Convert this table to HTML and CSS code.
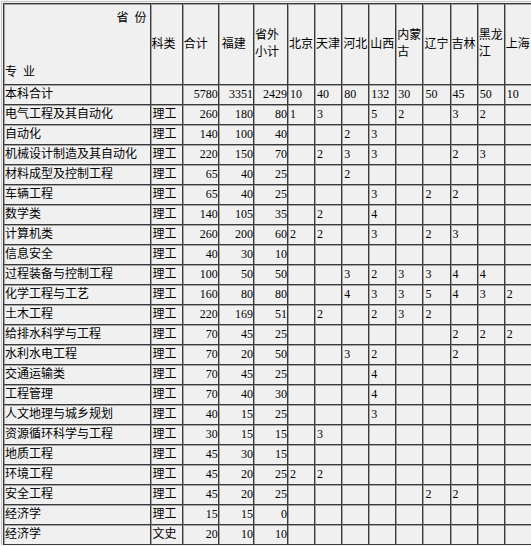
FILE: index.html
```html
<!DOCTYPE html>
<html lang="zh-CN">
<head>
<meta charset="utf-8">
<title>分省招生计划</title>
<link rel="stylesheet" href="styles.css">
</head>
<body>
<table class="plan">
<thead>
<tr>
<th class="c-major"><div class="corner"><span class="prov">省 份</span><span class="maj">专 业</span></div></th>
<th class="c-type">科类</th>
<th class="c-total">合计</th>
<th class="c-fj">福建</th>
<th class="c-out">省外小计</th>
<th class="c-p">北京</th>
<th class="c-p">天津</th>
<th class="c-p">河北</th>
<th class="c-p">山西</th>
<th class="c-p">内蒙古</th>
<th class="c-p">辽宁</th>
<th class="c-p">吉林</th>
<th class="c-p">黑龙江</th>
<th class="c-p">上海</th>
<th class="c-p">江苏</th>
</tr>
</thead>
<tbody>
<tr><td>本科合计</td><td></td><td class="n">5780</td><td class="n">3351</td><td class="n">2429</td><td>10</td><td>40</td><td>80</td><td>132</td><td>30</td><td>50</td><td>45</td><td>50</td><td>10</td><td></td></tr>
<tr><td>电气工程及其自动化</td><td>理工</td><td class="n">260</td><td class="n">180</td><td class="n">80</td><td>1</td><td>3</td><td></td><td>5</td><td>2</td><td></td><td>3</td><td>2</td><td></td><td></td></tr>
<tr><td>自动化</td><td>理工</td><td class="n">140</td><td class="n">100</td><td class="n">40</td><td></td><td></td><td>2</td><td>3</td><td></td><td></td><td></td><td></td><td></td><td></td></tr>
<tr><td>机械设计制造及其自动化</td><td>理工</td><td class="n">220</td><td class="n">150</td><td class="n">70</td><td></td><td>2</td><td>3</td><td>3</td><td></td><td></td><td>2</td><td>3</td><td></td><td></td></tr>
<tr><td>材料成型及控制工程</td><td>理工</td><td class="n">65</td><td class="n">40</td><td class="n">25</td><td></td><td></td><td>2</td><td></td><td></td><td></td><td></td><td></td><td></td><td></td></tr>
<tr><td>车辆工程</td><td>理工</td><td class="n">65</td><td class="n">40</td><td class="n">25</td><td></td><td></td><td></td><td>3</td><td></td><td>2</td><td>2</td><td></td><td></td><td></td></tr>
<tr><td>数学类</td><td>理工</td><td class="n">140</td><td class="n">105</td><td class="n">35</td><td></td><td>2</td><td></td><td>4</td><td></td><td></td><td></td><td></td><td></td><td></td></tr>
<tr><td>计算机类</td><td>理工</td><td class="n">260</td><td class="n">200</td><td class="n">60</td><td>2</td><td>2</td><td></td><td>3</td><td></td><td>2</td><td>3</td><td></td><td></td><td></td></tr>
<tr><td>信息安全</td><td>理工</td><td class="n">40</td><td class="n">30</td><td class="n">10</td><td></td><td></td><td></td><td></td><td></td><td></td><td></td><td></td><td></td><td></td></tr>
<tr><td>过程装备与控制工程</td><td>理工</td><td class="n">100</td><td class="n">50</td><td class="n">50</td><td></td><td></td><td>3</td><td>2</td><td>3</td><td>3</td><td>4</td><td>4</td><td></td><td></td></tr>
<tr><td>化学工程与工艺</td><td>理工</td><td class="n">160</td><td class="n">80</td><td class="n">80</td><td></td><td></td><td>4</td><td>3</td><td>3</td><td>5</td><td>4</td><td>3</td><td>2</td><td></td></tr>
<tr><td>土木工程</td><td>理工</td><td class="n">220</td><td class="n">169</td><td class="n">51</td><td></td><td>2</td><td></td><td>2</td><td>3</td><td>2</td><td></td><td></td><td></td><td></td></tr>
<tr><td>给排水科学与工程</td><td>理工</td><td class="n">70</td><td class="n">45</td><td class="n">25</td><td></td><td></td><td></td><td></td><td></td><td></td><td>2</td><td>2</td><td>2</td><td></td></tr>
<tr><td>水利水电工程</td><td>理工</td><td class="n">70</td><td class="n">20</td><td class="n">50</td><td></td><td></td><td>3</td><td>2</td><td></td><td></td><td>2</td><td></td><td></td><td></td></tr>
<tr><td>交通运输类</td><td>理工</td><td class="n">70</td><td class="n">45</td><td class="n">25</td><td></td><td></td><td></td><td>4</td><td></td><td></td><td></td><td></td><td></td><td></td></tr>
<tr><td>工程管理</td><td>理工</td><td class="n">70</td><td class="n">40</td><td class="n">30</td><td></td><td></td><td></td><td>4</td><td></td><td></td><td></td><td></td><td></td><td></td></tr>
<tr><td>人文地理与城乡规划</td><td>理工</td><td class="n">40</td><td class="n">15</td><td class="n">25</td><td></td><td></td><td></td><td>3</td><td></td><td></td><td></td><td></td><td></td><td></td></tr>
<tr><td>资源循环科学与工程</td><td>理工</td><td class="n">30</td><td class="n">15</td><td class="n">15</td><td></td><td>3</td><td></td><td></td><td></td><td></td><td></td><td></td><td></td><td></td></tr>
<tr><td>地质工程</td><td>理工</td><td class="n">45</td><td class="n">30</td><td class="n">15</td><td></td><td></td><td></td><td></td><td></td><td></td><td></td><td></td><td></td><td></td></tr>
<tr><td>环境工程</td><td>理工</td><td class="n">45</td><td class="n">20</td><td class="n">25</td><td>2</td><td>2</td><td></td><td></td><td></td><td></td><td></td><td></td><td></td><td></td></tr>
<tr><td>安全工程</td><td>理工</td><td class="n">45</td><td class="n">20</td><td class="n">25</td><td></td><td></td><td></td><td></td><td></td><td>2</td><td>2</td><td></td><td></td><td></td></tr>
<tr><td>经济学</td><td>理工</td><td class="n">15</td><td class="n">15</td><td class="n">0</td><td></td><td></td><td></td><td></td><td></td><td></td><td></td><td></td><td></td><td></td></tr>
<tr class="last"><td>经济学</td><td>文史</td><td class="n">20</td><td class="n">10</td><td class="n">10</td><td></td><td></td><td></td><td></td><td></td><td></td><td></td><td></td><td></td><td></td></tr>
</tbody>
</table>
</body>
</html>
```
FILE: styles.css
```css
html, body {
  margin: 0;
  padding: 0;
  overflow: hidden;
  background: #f6f6f6;
}

.plan {
  margin: 1px 0 0 1px;
  table-layout: fixed;
  width: 557px;
  border-collapse: separate;
  border-spacing: 0;
  border: 1px solid #c4c4c4;
  border-right: 0;
  border-bottom: 0;
  padding: 1px 0 0 1px;
  font-family: "Liberation Serif", "Noto Sans CJK SC", serif;
  font-size: 12px;
  color: #000;
  background: #f0f0f0;
}

.plan th,
.plan td {
  box-sizing: border-box;
  border-left: 1px solid #3a3a3a;
  border-top: 1px solid #3a3a3a;
  box-shadow: inset 1px 1px 0 #a4a4a4;
  padding: 0 0 0 2px;
  line-height: 19px;
  white-space: nowrap;
  overflow: hidden;
  text-align: left;
  vertical-align: middle;
  font-weight: normal;
}

.plan th {
  white-space: normal;
  line-height: 17px;
  padding-left: 1px;
}

.plan .c-major { width: 146px; padding: 0; }
.plan .c-type { width: 32px; }
.plan .c-total { width: 36px; }
.plan .c-fj { width: 35px; padding-left: 3px; }
.plan .c-out { width: 34px; }
.plan .c-p { width: 27px; }

.corner {
  box-sizing: border-box;
  height: 80px;
  display: flex;
  flex-direction: column;
  justify-content: space-between;
  padding: 6px 3px 4px 1px;
  line-height: 16px;
  word-spacing: 3px;
}

.prov {
  text-align: right;
}

.maj {
  text-align: left;
}

.plan td.n {
  text-align: right;
  padding: 0 0 0 1px;
}

.plan tbody td:first-child {
  padding-left: 1px;
}

.plan tr.last td {
  border-bottom: 1px solid #3a3a3a;
}
```
